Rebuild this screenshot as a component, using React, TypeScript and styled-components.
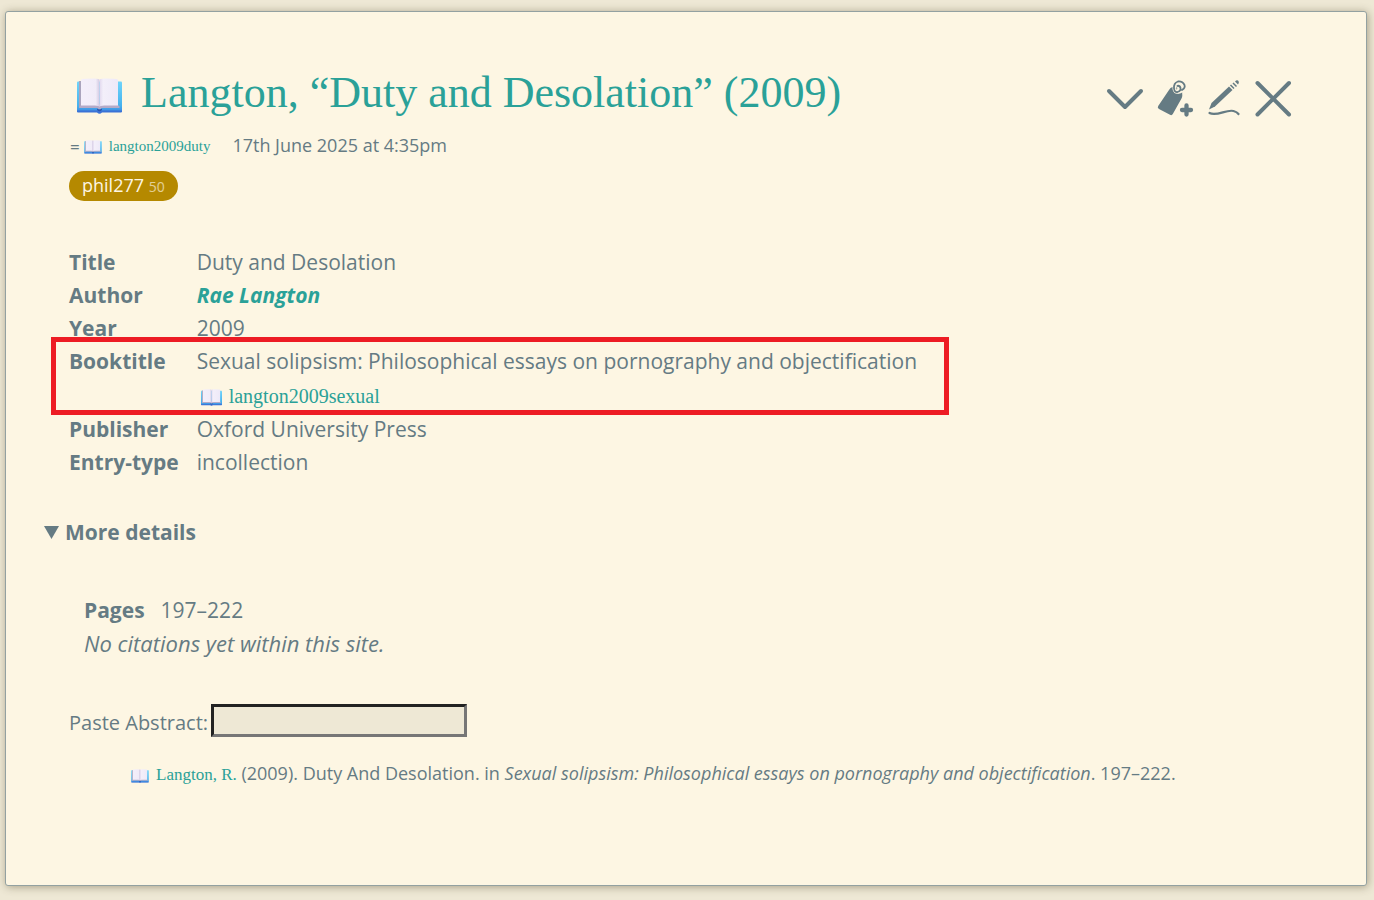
import React, { useId } from "react";
import styled, { createGlobalStyle } from "styled-components";

const sans = `"Open Sans", "Noto Sans", sans-serif`;
const serif = `"Liberation Serif", "Times New Roman", serif`;
const slate = "#657b83";
const teal = "#2aa198";

const GlobalStyle = createGlobalStyle`
  *, *::before, *::after { box-sizing: border-box; }
  body { margin: 0; background: #eee8d5; color: ${slate}; font-family: ${sans}; font-size: 21px; line-height: 33px; }
`;

const Page = styled.main`
  padding: 11px 7px 15px 5px;
`;

const Card = styled.article`
  padding: 56px 63px 94px;
  background: #fdf6e3;
  border: 1px solid #93a1a1;
  border-radius: 3px;
  box-shadow: 1px 1px 8px rgba(80, 70, 40, 0.45);
`;

const Header = styled.header`
  display: flex;
  justify-content: space-between;
  align-items: flex-start;
`;

const Title = styled.h1`
  display: flex;
  align-items: center;
  gap: 19px;
  margin: 0;
  padding-left: 8px;
  color: ${teal};
  font: 400 44px/50px ${serif};
  svg { margin-top: 6px; }
`;

const Toolbar = styled.div`
  display: flex;
  gap: 9px;
  padding: 10px 11px 0 0;
`;

const IconButton = styled.button`
  width: 40px;
  height: 40px;
  padding: 0;
  border: 0;
  background: none;
  color: ${slate};
  cursor: pointer;
  svg { display: block; }
`;

const Meta = styled.div`
  display: flex;
  align-items: center;
  gap: 22px;
  padding-top: 11px;
  font-size: 18px;
`;

const Reference = styled.span`
  display: flex;
  align-items: center;
  gap: 4px;
  padding: 2px 0 0 1px;
  font-size: 17px;
  line-height: 31px;
`;

const BookLink = styled.a<{ $size: number }>`
  color: ${teal};
  font-family: ${serif};
  font-size: ${(p) => p.$size}px;
  text-decoration: none;
  svg { margin-right: 7px; vertical-align: -3px; }
`;

const Tag = styled.button`
  display: block;
  height: 30px;
  margin-top: 9px;
  padding: 0 13px;
  border: 0;
  border-radius: 15px;
  background: #b58900;
  color: #fdf6e3;
  font: 18px/28px ${sans};
  cursor: pointer;
  small { font-size: 14px; opacity: 0.65; }
`;

const Fields = styled.table`
  margin-top: 45px;
  border-collapse: collapse;
  th, td { padding: 0; text-align: left; vertical-align: top; }
  th { padding-right: 18px; font-weight: 700; }
`;

const Row = styled.tr`
  position: relative;
`;

const PersonLink = styled.a`
  color: ${teal};
  font-weight: 700;
  font-style: italic;
  text-decoration: none;
`;

const Linked = styled.div`
  height: 35px;
  padding: 1px 0 0 4px;
`;

const Highlight = styled.span`
  position: absolute;
  inset: -8px -32px -2px -18px;
  border: 5px solid #ed1c24;
  pointer-events: none;
`;

const More = styled.details`
  margin-top: 37px;
`;

const Summary = styled.summary`
  display: flex;
  align-items: center;
  gap: 6px;
  margin-left: -25px;
  font-weight: 700;
  list-style: none;
  cursor: pointer;
`;

const MoreBody = styled.div`
  padding: 45px 0 0 15px;
`;

const Pages = styled.table`
  border-collapse: collapse;
  th { padding: 0 16px 0 0; font-weight: 700; }
  td { padding: 0; }
`;

const Note = styled.em`
  display: block;
  font-size: 22px;
`;

const Abstract = styled.div`
  display: flex;
  align-items: center;
  gap: 3px;
  margin-top: 44px;
  font-size: 20px;
  line-height: 29px;
  label { padding-top: 4px; }
`;

const AbstractInput = styled.input`
  width: 256px;
  height: 33px;
  border: 3px solid;
  border-color: #222 #767676 #767676 #222;
  background: #eee8d5;
  color: ${slate};
  font: 18px ${sans};
`;

const Citation = styled.p`
  margin: 20px 0 0 62px;
  font-size: 18px;
`;

const Book = ({ size }: { size: number }) => {
  const id = useId();
  return (
    <svg width={size} height={Math.round(size * 0.8)} viewBox="0 0 45 36" aria-hidden="true">
      <defs>
        <linearGradient id={id + "c"} x1="0" y1="0" x2="0" y2="1">
          <stop offset="0" stopColor="#6fd4fa" />
          <stop offset="0.8" stopColor="#45b2ee" />
          <stop offset="1" stopColor="#3f86e0" />
        </linearGradient>
        <linearGradient id={id + "l"}>
          <stop offset="0" stopColor="#f4effb" />
          <stop offset="0.8" stopColor="#f1ecf8" />
          <stop offset="1" stopColor="#d3c9e2" />
        </linearGradient>
        <linearGradient id={id + "r"}>
          <stop offset="0" stopColor="#e1d8ee" />
          <stop offset="0.2" stopColor="#f3effa" />
          <stop offset="1" stopColor="#eee9f8" />
        </linearGradient>
      </defs>
      <path d="M1 3.500H44Q45 3.500 45 4.500V33Q45 34 44 34H1Q0 34 0 33V4.500Q0 3.500 1 3.500Z" fill={`url(#${id}c)`} />
      <path d="M0 32.500H45V33.500Q45 34.500 44 34.500H25Q22.500 37 20 34.500H1Q0 34.500 0 33.500Z" fill="#3b72d6" />
      <path d="M2 3H5V30H2Z" fill="#aaa4bd" />
      <path d="M2 29L5 26H40L43 29L42 30H25L22.500 31.500L20 30H3Z" fill="#b4aac8" />
      <path d="M5 1Q6 .5 18 .5Q22 .5 22.500 2V29Q22 27.500 18 27.500H4V2.500Q4 1.500 5 1Z" fill={`url(#${id}l)`} />
      <path d="M40 1Q39 .5 27 .5Q23 .5 22.500 2V29Q23 27.500 27 27.500H41V2.500Q41 1.500 40 1Z" fill={`url(#${id}r)`} />
      <path d="M20 30.500Q22.500 32.500 25 30.500V32Q22.500 34.500 20 32Z" fill="#2c55ad" />
    </svg>
  );
};

const ChevronIcon = () => (
  <svg width="40" height="40" viewBox="0 0 40 40" fill="none" stroke="currentColor" strokeWidth="4" strokeLinecap="round" strokeLinejoin="round">
    <path d="M4 13L20 29L36 13" />
  </svg>
);

const TagIcon = () => (
  <svg width="40" height="40" viewBox="0 0 40 40" fill="none" stroke="currentColor">
    <path d="M15 12Q16.500 9.500 18 9.300L24 8.500L28 12L28.300 17.500Q28.300 19 27.500 20.500L18.800 36Q17.800 37.800 16 36.800L5 31Q3 30 4.200 28Z" fill="currentColor" stroke="none" />
    <path d="M23.500 14Q29 13 29.800 9Q29 4 24 4Q20 5.500 20.500 11Q21 14.500 24 13.500Q26.500 11.500 24.500 8.500" stroke="#fdf6e3" strokeWidth="4" />
    <path d="M28 12Q31.500 10 30.500 7Q28.500 3 24 3.500Q19.500 5 20 10.500Q20.500 14.500 23.500 14Q27 13 26.500 10Q26 7.500 23.500 7.800" strokeWidth="1.800" strokeLinecap="round" />
    <path d="M32.500 27.500V36.500M28 32H37" strokeWidth="4.300" strokeLinecap="round" />
  </svg>
);

const PencilIcon = () => (
  <svg width="40" height="40" viewBox="0 0 40 40">
    <path d="M6 31.500L8.500 25L26 8.500L29.500 12L12 28.500Z" fill="currentColor" />
    <path d="M27.500 7L31 10.500M30 5L33.500 8.500" stroke="currentColor" strokeWidth="1.500" />
    <path d="M32 3.500Q34 1.500 35.500 3Q36.500 4.500 35 6.500Z" fill="currentColor" />
    <path d="M6.500 35C13.500 39 23.500 31 30.500 33Q34 34 35.500 36" fill="none" stroke="currentColor" strokeWidth="2.200" strokeLinecap="round" />
  </svg>
);

const CloseIcon = () => (
  <svg width="40" height="40" viewBox="0 0 40 40" fill="none" stroke="currentColor" strokeWidth="4" strokeLinecap="round">
    <path d="M5.500 5L37 36.500M37 5L5.500 36.500" />
  </svg>
);

const SummaryArrow = () => (
  <svg width="15" height="13" viewBox="0 0 15 13" aria-hidden="true">
    <path d="M0 0H15L7.500 13Z" fill="currentColor" />
  </svg>
);

export default function App() {
  return (
    <Page>
      <GlobalStyle />
      <Card>
        <Header>
          <Title>
            <Book size={45} />
            Langton, “Duty and Desolation” (2009)
          </Title>
          <Toolbar>
            <IconButton aria-label="More actions"><ChevronIcon /></IconButton>
            <IconButton aria-label="Add tag"><TagIcon /></IconButton>
            <IconButton aria-label="Edit"><PencilIcon /></IconButton>
            <IconButton aria-label="Close"><CloseIcon /></IconButton>
          </Toolbar>
        </Header>
        <Meta>
          <Reference>
            =
            <BookLink href="#langton2009duty" $size={15}>
              <Book size={18} />
              langton2009duty
            </BookLink>
          </Reference>
          <time dateTime="2025-06-17T16:35">17th June 2025 at 4:35pm</time>
        </Meta>
        <Tag>
          phil277 <small>50</small>
        </Tag>
        <Fields>
          <tbody>
            <Row><th scope="row">Title</th><td>Duty and Desolation</td></Row>
            <Row><th scope="row">Author</th><td><PersonLink href="#rae-langton">Rae Langton</PersonLink></td></Row>
            <Row><th scope="row">Year</th><td>2009</td></Row>
            <Row>
              <th scope="row">Booktitle</th>
              <td>
                Sexual solipsism: Philosophical essays on pornography and objectification
                <Linked>
                  <BookLink href="#langton2009sexual" $size={20}>
                    <Book size={21} />
                    langton2009sexual
                  </BookLink>
                </Linked>
                <Highlight />
              </td>
            </Row>
            <Row><th scope="row">Publisher</th><td>Oxford University Press</td></Row>
            <Row><th scope="row">Entry-type</th><td>incollection</td></Row>
          </tbody>
        </Fields>
        <More open>
          <Summary>
            <SummaryArrow />
            More details
          </Summary>
          <MoreBody>
            <Pages>
              <tbody>
                <tr><th scope="row">Pages</th><td>197–222</td></tr>
              </tbody>
            </Pages>
            <Note>No citations yet within this site.</Note>
          </MoreBody>
        </More>
        <Abstract>
          <label htmlFor="abstract">Paste Abstract:</label>
          <AbstractInput id="abstract" type="text" />
        </Abstract>
        <Citation>
          <BookLink href="#langton2009duty" $size={17}>
            <Book size={18} />
            Langton, R.
          </BookLink>{" "}
          (2009). Duty And Desolation. in <em>Sexual solipsism: Philosophical essays on pornography and objectification</em>. 197–222.
        </Citation>
      </Card>
    </Page>
  );
}
